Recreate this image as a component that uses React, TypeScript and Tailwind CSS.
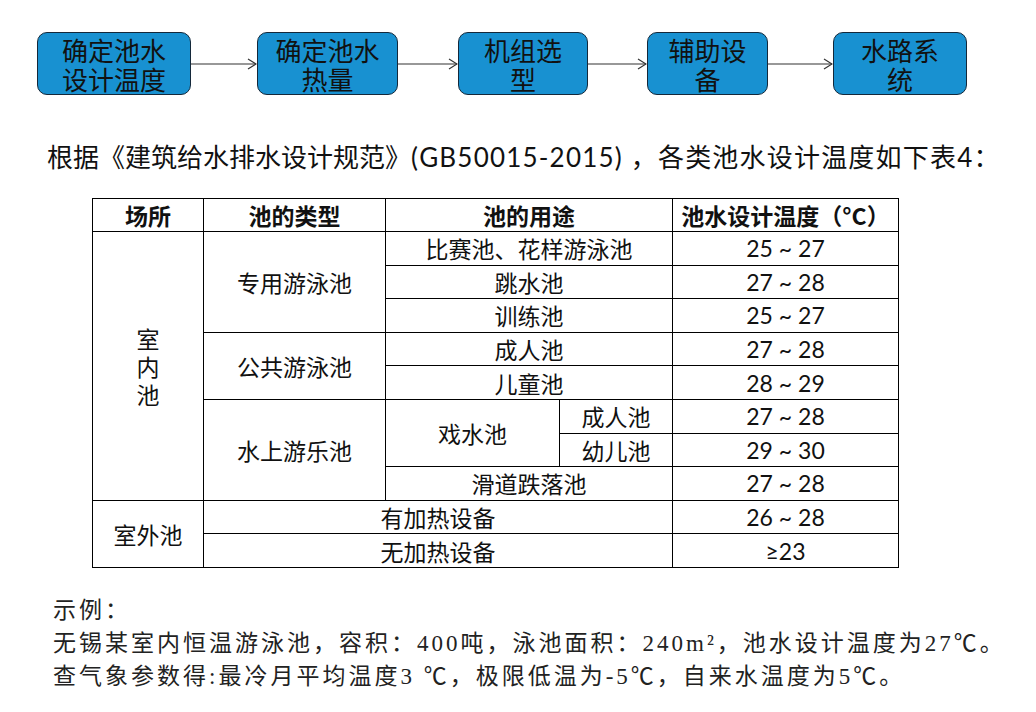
import React from "react";

const boxCls =
  "flex h-[63px] shrink-0 flex-col items-center justify-center rounded-[10px] border-[1.5px] border-[#14283a] bg-[#1891d1] text-center text-[26px] leading-[29px] text-[#111]";

function Arrow({ w }: { w: number }) {
  return (
    <svg width={w} height="14" viewBox={`0 0 ${w} 14`} className="shrink-0">
      <line x1="0" y1="7" x2={w - 1} y2="7" stroke="#333" strokeWidth="1.2" />
      <polyline points={`${w - 9},2 ${w - 1},7 ${w - 9},12`} fill="none" stroke="#333" strokeWidth="1.2" />
    </svg>
  );
}

function Box({ w, a, b }: { w: string; a: string; b: string }) {
  return (
    <div className={`${boxCls} ${w}`}>
      <span className="block h-[29px]">{a}</span>
      <span className="block h-[29px]">{b}</span>
    </div>
  );
}

const td = "border border-black p-0 text-center align-middle";
const num = "font-['Lato','Noto_Sans_CJK_SC',sans-serif]";

export default function App() {
  return (
    <div className="h-[712px] w-[1036px] overflow-hidden bg-white font-['Noto_Sans_CJK_SC',sans-serif] text-[#111]">
      {/* flow chart */}
      <div className="flex items-center pl-[37px] pt-[32px]">
        <Box w="w-[154px]" a="确定池水" b="设计温度" />
        <Arrow w={66} />
        <Box w="w-[141px]" a="确定池水" b="热量" />
        <Arrow w={60} />
        <Box w="w-[130px]" a="机组选" b="型" />
        <Arrow w={59} />
        <Box w="w-[121px]" a="辅助设" b="备" />
        <Arrow w={65} />
        <Box w="w-[134px]" a="水路系" b="统" />
      </div>

      {/* heading */}
      <div className="mt-[46px] pl-[47px] font-['Lato','Noto_Sans_CJK_SC',sans-serif] text-[26px] leading-[32px] whitespace-nowrap">
        <span>根据《建筑给水排水设计规范》</span>
        <span className="tracking-[1.2px]">(GB50015-2015)&nbsp;</span>
        <span className="tracking-[1.2px]">，各类池水设计温度如下表4：</span>
      </div>

      {/* table */}
      <div className="mt-[25px] pl-[92px]">
        <table className="table-fixed border-collapse text-[23px] leading-[28px]">
          <colgroup>
            <col className="w-[111px]" />
            <col className="w-[182px]" />
            <col className="w-[174px]" />
            <col className="w-[113px]" />
            <col className="w-[226px]" />
          </colgroup>
          <tbody>
            <tr className="h-[33px] font-bold">
              <td className={td}>场所</td>
              <td className={td}>池的类型</td>
              <td className={td} colSpan={2}>池的用途</td>
              <td className={td}>池水设计温度（°C）</td>
            </tr>
            <tr className="h-[33.6px]">
              <td className={td} rowSpan={8}>
                <div className="flex flex-col items-center leading-[28px]">
                  <span>室</span>
                  <span>内</span>
                  <span>池</span>
                </div>
              </td>
              <td className={td} rowSpan={3}>专用游泳池</td>
              <td className={td} colSpan={2}>比赛池、花样游泳池</td>
              <td className={`${td} ${num}`}>25 ~ 27</td>
            </tr>
            <tr className="h-[33.6px]">
              <td className={td} colSpan={2}>跳水池</td>
              <td className={`${td} ${num}`}>27 ~ 28</td>
            </tr>
            <tr className="h-[33.6px]">
              <td className={td} colSpan={2}>训练池</td>
              <td className={`${td} ${num}`}>25 ~ 27</td>
            </tr>
            <tr className="h-[33.6px]">
              <td className={td} rowSpan={2}>公共游泳池</td>
              <td className={td} colSpan={2}>成人池</td>
              <td className={`${td} ${num}`}>27 ~ 28</td>
            </tr>
            <tr className="h-[33.6px]">
              <td className={td} colSpan={2}>儿童池</td>
              <td className={`${td} ${num}`}>28 ~ 29</td>
            </tr>
            <tr className="h-[33.6px]">
              <td className={td} rowSpan={3}>水上游乐池</td>
              <td className={td} rowSpan={2}>戏水池</td>
              <td className={td}>成人池</td>
              <td className={`${td} ${num}`}>27 ~ 28</td>
            </tr>
            <tr className="h-[33.6px]">
              <td className={td}>幼儿池</td>
              <td className={`${td} ${num}`}>29 ~ 30</td>
            </tr>
            <tr className="h-[33.6px]">
              <td className={td} colSpan={2}>滑道跌落池</td>
              <td className={`${td} ${num}`}>27 ~ 28</td>
            </tr>
            <tr className="h-[33.6px]">
              <td className={td} rowSpan={2}>室外池</td>
              <td className={td} colSpan={3}>有加热设备</td>
              <td className={`${td} ${num}`}>26 ~ 28</td>
            </tr>
            <tr className="h-[33.6px]">
              <td className={td} colSpan={3}>无加热设备</td>
              <td className={`${td} ${num}`}>≥23</td>
            </tr>
          </tbody>
        </table>
      </div>

      {/* example */}
      <div className="mt-[26px] pl-[53px] font-['Liberation_Serif','Noto_Sans_CJK_SC',serif] text-[23px] leading-[33px] tracking-[3px] text-[#222] whitespace-nowrap">
        <div>示例：</div>
        <div>无锡某室内恒温游泳池，容积：400吨，泳池面积：240m²，池水设计温度为27℃。</div>
        <div>查气象参数得:最冷月平均温度3 ℃，极限低温为-5℃，自来水温度为5℃。</div>
      </div>
    </div>
  );
}
